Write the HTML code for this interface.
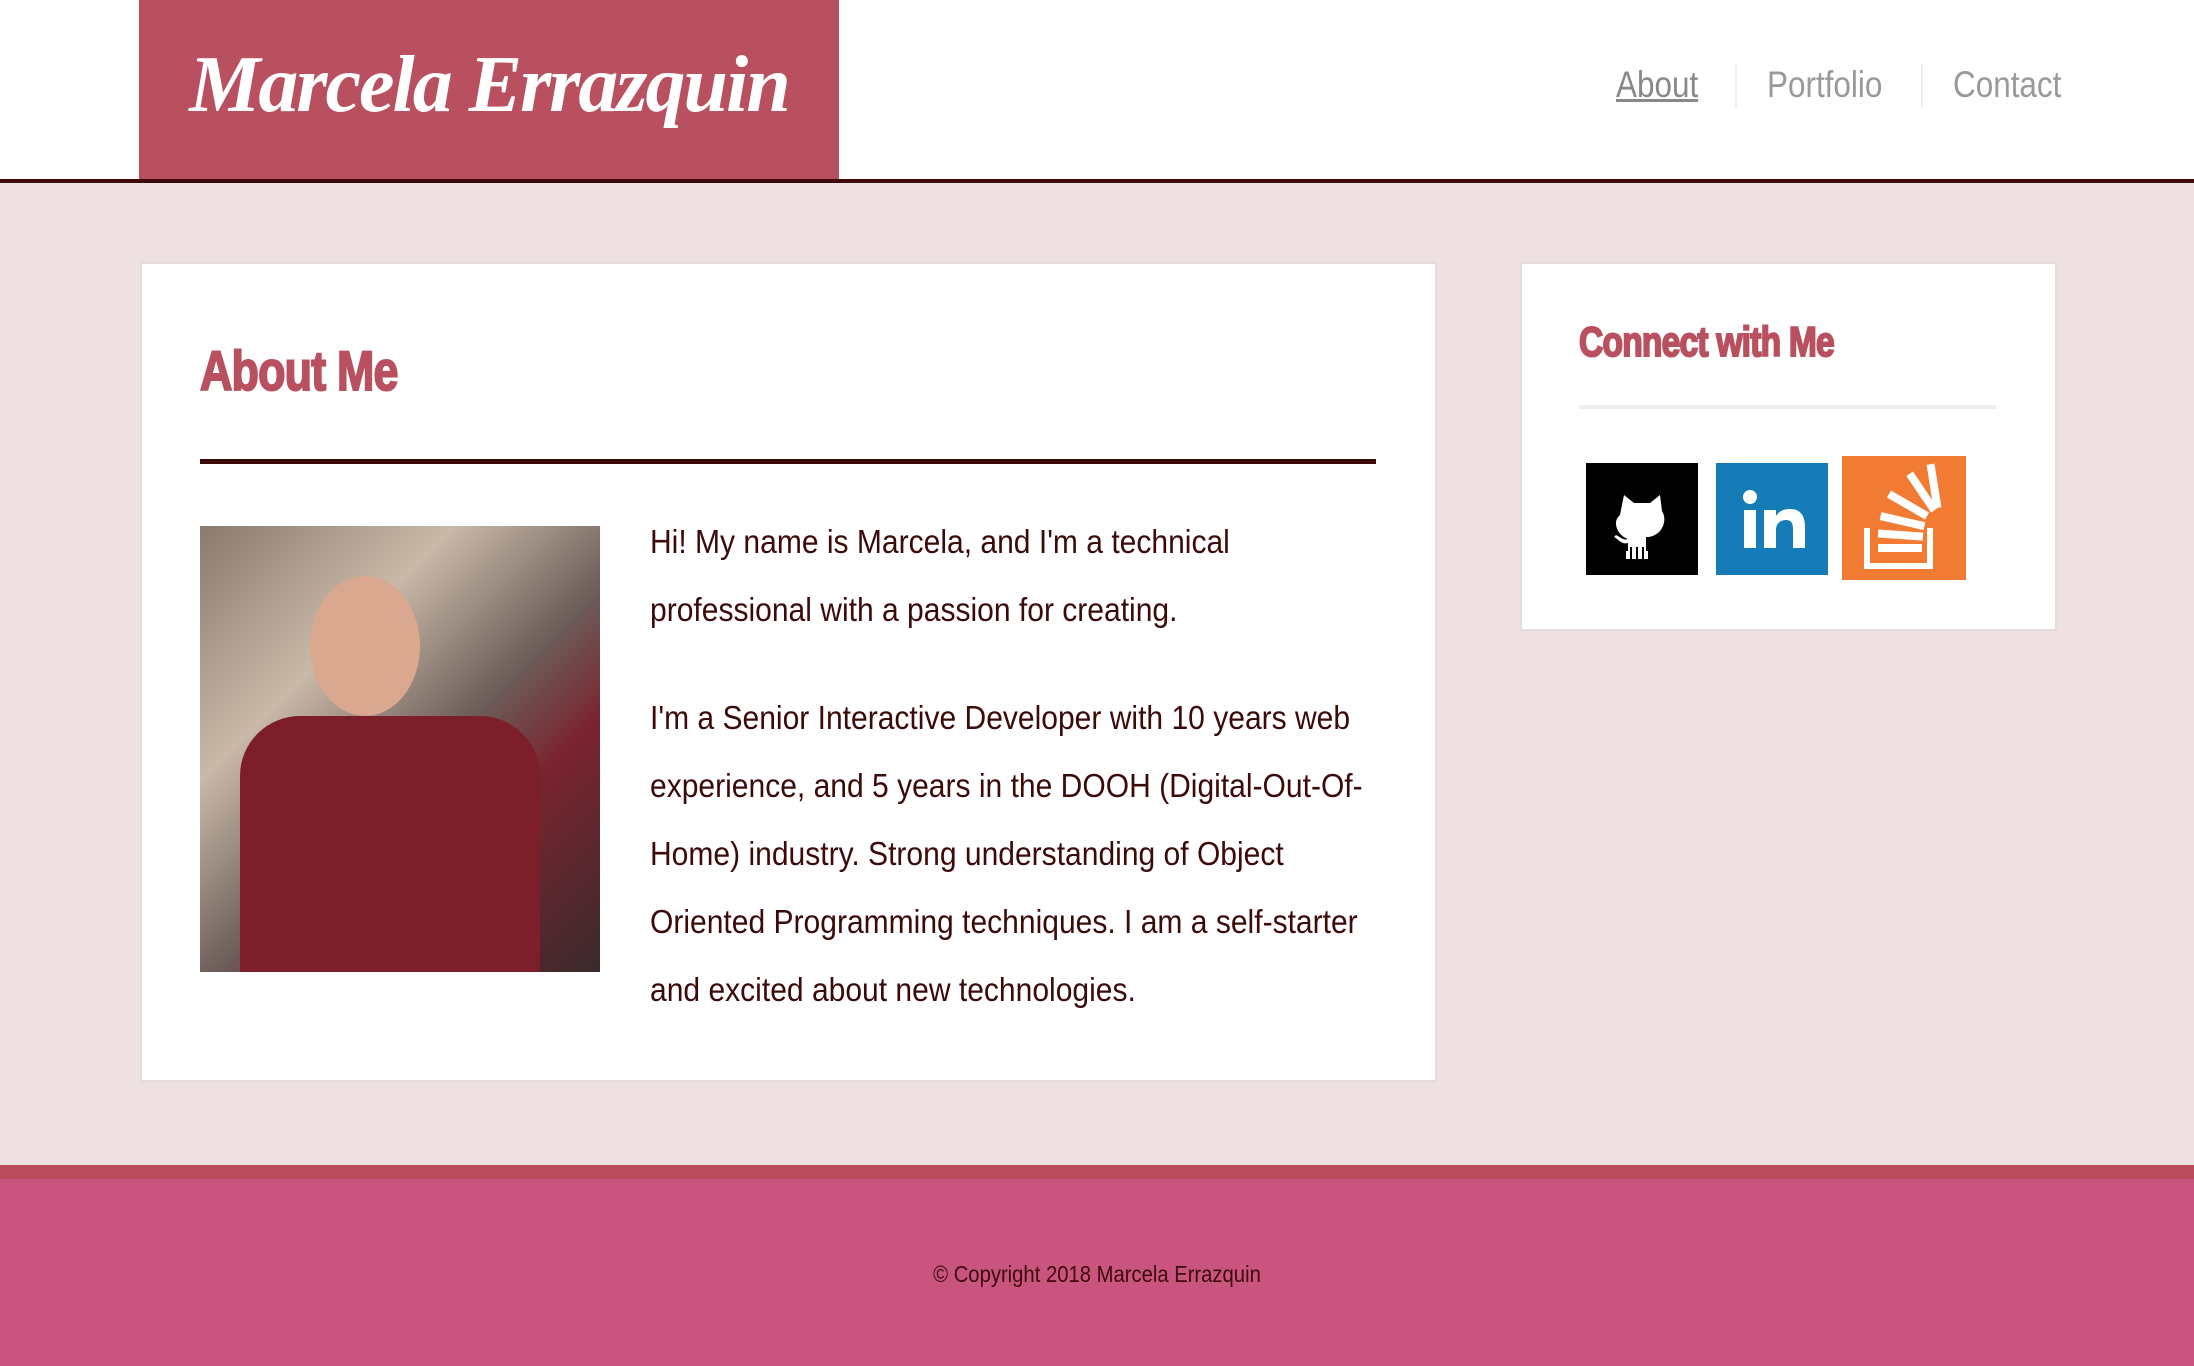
<!DOCTYPE html>
<html><head><meta charset="utf-8"><style>
*{margin:0;padding:0;box-sizing:border-box}
body{width:2194px;height:1366px;background:#efe0e1;font-family:"Liberation Sans",sans-serif;position:relative;overflow:hidden}
.hdr{position:absolute;left:0;top:0;width:2194px;height:183px;background:#fff;border-bottom:4px solid #3d0a0a}
.logo{position:absolute;left:139px;top:0;width:700px;height:179px;background:#b9505f;color:#fff;font-family:"Liberation Serif",serif;font-style:italic;font-weight:bold;font-size:80px;text-align:center;line-height:170px;letter-spacing:-2px}
.nav{position:absolute;top:64px;font-size:37px;color:#999;transform:scaleX(.85);transform-origin:left}
.sep{position:absolute;top:64px;width:2px;height:44px;background:#eee}
.card{position:absolute;background:#fff;border:2px solid #e6dcdd}
h1,h2{position:absolute;color:#b9505f;font-weight:bold;transform:scaleX(.8);transform-origin:left;letter-spacing:-1px;-webkit-text-stroke:2px #b9505f}
.txt{position:absolute;left:650px;color:#3d0a0a;font-size:33px;line-height:68px;white-space:nowrap;transform:scaleX(.91);transform-origin:left}
.foot{position:absolute;left:0;top:1165px;width:2194px;height:201px;background:#c9557e;border-top:14px solid #bb4c5e}
</style></head><body>
<div class="hdr">
<div class="logo">Marcela Errazquin</div>
<div class="nav" style="left:1616px;text-decoration:underline;color:#888">About</div>
<div class="sep" style="left:1735px"></div>
<div class="nav" style="left:1767px">Portfolio</div>
<div class="sep" style="left:1921px"></div>
<div class="nav" style="left:1953px">Contact</div>
</div>
<div class="card" style="left:140px;top:262px;width:1297px;height:820px"></div>
<h1 style="left:200px;top:338px;font-size:56px">About Me</h1>
<div style="position:absolute;left:200px;top:459px;width:1176px;height:5px;background:#3d0a0a"></div>
<div style="position:absolute;left:200px;top:526px;width:400px;height:446px;background:linear-gradient(135deg,#8a7a6e 0%,#c9b9a8 30%,#6b5c58 55%,#7a2430 70%,#3a2a2c 100%)">
<div style="position:absolute;left:110px;top:50px;width:110px;height:140px;border-radius:50%;background:#d9a88e"></div>
<div style="position:absolute;left:40px;top:190px;width:300px;height:256px;background:#7d1f2a;border-radius:60px 60px 0 0"></div>
</div>
<div class="txt" style="top:508px">Hi! My name is Marcela, and I'm a technical</div>
<div class="txt" style="top:576px">professional with a passion for creating.</div>
<div class="txt" style="top:684px">I'm a Senior Interactive Developer with 10 years web</div>
<div class="txt" style="top:752px">experience, and 5 years in the DOOH (Digital-Out-Of-</div>
<div class="txt" style="top:820px">Home) industry. Strong understanding of Object</div>
<div class="txt" style="top:888px">Oriented Programming techniques. I am a self-starter</div>
<div class="txt" style="top:956px">and excited about new technologies.</div>

<div class="card" style="left:1520px;top:262px;width:537px;height:369px"></div>
<h2 style="left:1579px;top:318px;font-size:42px">Connect with Me</h2>
<div style="position:absolute;left:1579px;top:405px;width:417px;height:4px;background:#eee"></div>
<svg style="position:absolute;left:1586px;top:463px" width="112" height="112" viewBox="0 0 112 112"><rect width="112" height="112" fill="#000"/><path fill="#fff" d="M38 32l10 8h16l10-8 2 16c4 6 3 16-4 22-5 4-10 4-12 4v14h2v8h-4v-12h-2v12h-4v-12h-2v12h-4v-12h-2v12h-4v-8h2v-8c-6 2-10-4-14-6l2-2c4 2 8 6 12 4-6-2-12-8-12-16 0-4 2-6 4-8z"/></svg>
<svg style="position:absolute;left:1716px;top:463px" width="112" height="112" viewBox="0 0 112 112"><rect width="112" height="112" fill="#157cb8"/><circle cx="34" cy="34" r="7" fill="#fff"/><rect x="28" y="47" width="12" height="38" fill="#fff"/><path fill="#fff" d="M48 47h12v6c3-5 8-7 14-7 10 0 15 6 15 18v21H77V66c0-6-2-9-7-9s-10 3-10 10v18H48z"/></svg>
<svg style="position:absolute;left:1842px;top:456px" width="124" height="124" viewBox="0 0 124 124"><rect width="124" height="124" fill="#f27b33"/><path fill="none" stroke="#fff" stroke-width="6" d="M25 72v38h63V72"/><g fill="#fff"><rect x="36" y="88" width="44" height="8"/><rect x="36" y="75" width="45" height="8" transform="rotate(4 58 79)"/><rect x="38" y="61" width="45" height="8" transform="rotate(13 60 65)"/><rect x="44" y="45" width="44" height="8" transform="rotate(30 66 49)"/><rect x="58" y="32" width="44" height="8" transform="rotate(56 80 36)"/><rect x="70" y="26" width="44" height="8" transform="rotate(81 92 30)"/></g></svg>

<div class="foot"><div style="text-align:center;margin-top:82px;font-size:23px;color:#3d0a0a;transform:scaleX(.88)">© Copyright 2018 Marcela Errazquin</div></div>
</body></html>
